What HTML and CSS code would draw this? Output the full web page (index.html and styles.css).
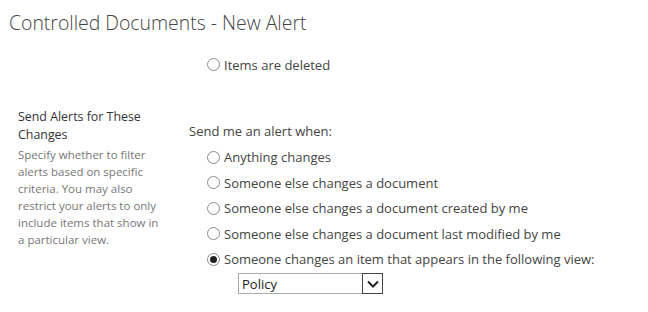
FILE: index.html
```html
<!DOCTYPE html>
<html lang="en">

<head>
  <meta charset="UTF-8" />
  <title>Controlled Documents - New Alert</title>
  <link rel="stylesheet" href="styles.css">
</head>

<body>
  <h1 class="page-title">Controlled Documents - New Alert</h1>

  <div class="top-options">
    <label class="option"><input type="radio" name="changeType" /> Items are deleted</label>
  </div>

  <div class="section">
    <div class="section-info">
      <h3>Send Alerts for These Changes</h3>
      <p>Specify whether to filter alerts based on specific criteria. You may also restrict your alerts to only include
        items that show in a particular view.</p>
    </div>
    <div class="section-body">
      <div class="section-label">Send me an alert when:</div>
      <div class="option-list">
        <label class="option"><input type="radio" name="filter" /> Anything changes</label>
        <label class="option"><input type="radio" name="filter" /> Someone else changes a document</label>
        <label class="option"><input type="radio" name="filter" /> Someone else changes a document created by me</label>
        <label class="option"><input type="radio" name="filter" /> Someone else changes a document last modified by me</label>
        <label class="option"><input type="radio" name="filter" checked /> Someone changes an item that appears in the following view:</label>
      </div>
      <div class="view-select">
        <select>
          <option>Policy</option>
        </select>
        <span class="select-button">
          <svg width="14" height="10" viewBox="0 0 14 10">
            <path d="M2 2.5 L7 7.5 L12 2.5" fill="none" stroke="#222" stroke-width="2" />
          </svg>
        </span>
      </div>
    </div>
  </div>
</body>

</html>
```

FILE: styles.css
```css
body {
  font-family: "Open Sans", Arial, sans-serif;
  font-size: 13px;
  color: #444;
  background-color: #fff;
  margin: 0;
  padding: 0;
}

.page-title {
  font-size: 19.4px;
  font-weight: 300;
  color: #444;
  margin: 0;
  padding: 9px 0 0 9px;
  line-height: 28px;
}

.top-options {
  padding: 15px 0 0 207px;
}

.option {
  display: flex;
  align-items: center;
  height: 25.5px;
  white-space: nowrap;
}

.option input {
  appearance: none;
  width: 13px;
  height: 13px;
  margin: 0 4px 0 0;
  border: 1px solid #8a8a8a;
  border-radius: 50%;
  background-color: #fff;
  box-sizing: border-box;
  position: relative;
}

.option input:checked::after {
  content: "";
  position: absolute;
  left: 2px;
  top: 2px;
  width: 7px;
  height: 7px;
  border-radius: 50%;
  background-color: #222;
}

.section {
  display: flex;
  padding-top: 30px;
}

.section-info {
  width: 146px;
  padding-left: 18px;
  margin-right: 25px;
}

.section-info h3 {
  font-size: 12.4px;
  font-weight: 400;
  color: #333;
  line-height: 18px;
  margin: 0 0 2px 0;
}

.section-info p {
  font-size: 11.5px;
  color: #777;
  line-height: 17px;
  margin: 0;
}

.section-body {
  padding-top: 14px;
}

.section-label {
  line-height: 18px;
  margin-bottom: 5px;
}

.option-list {
  padding-left: 18px;
}

.view-select {
  position: relative;
  margin: 1px 0 0 49px;
  width: 145px;
  height: 21px;
}

.view-select select {
  appearance: none;
  width: 145px;
  height: 21px;
  border: 1px solid #ababab;
  border-radius: 0;
  background-color: #fff;
  font-family: "Open Sans", Arial, sans-serif;
  font-size: 13px;
  color: #222;
  padding: 0 0 0 3px;
}

.select-button {
  position: absolute;
  right: 0;
  top: 0;
  width: 21px;
  height: 21px;
  box-sizing: border-box;
  border: 1px solid #444;
  display: flex;
  align-items: center;
  justify-content: center;
  background-color: #fff;
}
```
